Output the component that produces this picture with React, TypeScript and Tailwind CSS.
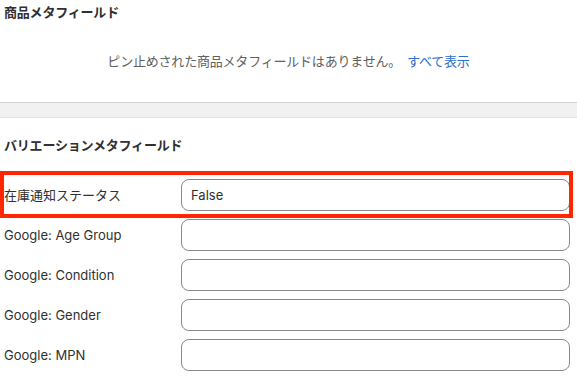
import React from 'react';

const font = { fontFamily: 'Inter, "Noto Sans CJK JP", sans-serif' };

const rows: { label: string; value: string }[] = [
  { label: '在庫通知ステータス', value: 'False' },
  { label: 'Google: Age Group', value: '' },
  { label: 'Google: Condition', value: '' },
  { label: 'Google: Gender', value: '' },
  { label: 'Google: MPN', value: '' },
];

const App: React.FC = () => {
  return (
    <div className="w-[577px] h-[381px] overflow-hidden bg-white text-[13px] text-[#303030]" style={font}>
      {/* 商品メタフィールド */}
      <div className="px-1 pt-[2px]">
        <h2 className="font-bold leading-5 tracking-[-0.2px]">商品メタフィールド</h2>
        <p className="mt-[29px] text-center leading-5 text-[#616161] tracking-[-0.2px]">
          ピン止めされた商品メタフィールドはありません。
          <a className="ml-[6px] text-[#2c6ecb]">すべて表示</a>
        </p>
      </div>

      {/* 区切り */}
      <div className="mt-[31px] h-4 border-t border-b border-t-[#d3d3d3] border-b-[#e3e3e3] bg-[#f1f1f1]" />

      {/* バリエーションメタフィールド */}
      <div className="pl-1 pr-[7px] pt-[17px]">
        <h2 className="font-bold leading-5 tracking-[-0.2px]">バリエーションメタフィールド</h2>
        <div className="mt-6 flex flex-col gap-2">
          {rows.map((row, i) => (
            <div key={row.label} className="relative grid grid-cols-[177px_1fr] items-center">
              <span className="leading-5">{row.label}</span>
              <div className="h-8 rounded-lg border border-[#8a8a8a] bg-white px-[9px] flex items-center leading-5">
                {row.value}
              </div>
              {i === 0 && (
                <div className="pointer-events-none absolute top-[-8px] bottom-[-7px] left-[-4px] right-[-3px] border-4 border-[#ff2600]" />
              )}
            </div>
          ))}
        </div>
      </div>
    </div>
  );
};

export default App;
